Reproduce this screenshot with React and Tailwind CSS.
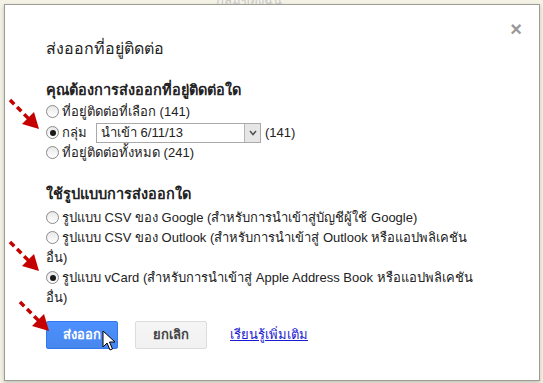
import React from 'react';

const Radio = ({ checked }) => (
    <span className="inline-block align-[-2px] mr-[3px] w-[13px] h-[13px] rounded-full border border-[#8a8a8a] bg-gradient-to-b from-[#e8e8e8] to-white relative">
        {checked && <span className="absolute left-[2.5px] top-[2.5px] w-[6px] h-[6px] rounded-full bg-[#1a1a1a]" />}
    </span>
);

const RedArrow = ({ className }) => (
    <svg className={className} width="36" height="36" viewBox="0 0 36 36">
        <path d="M2 2 L22 22" stroke="#c40000" strokeWidth="3.5" strokeDasharray="6 4" fill="none" />
        <path d="M14 26 L31 31 L26 14 Z" fill="#c40000" />
    </svg>
);

const Cursor = ({ className }) => (
    <svg className={className} width="14" height="22" viewBox="0 0 14 22">
        <path d="M1 1 L1 17 L5 13 L8 20 L10.5 19 L7.5 12 L13 12 Z" fill="white" stroke="black" strokeWidth="1" strokeLinejoin="round" />
    </svg>
);

export default function App() {
    const font = { fontFamily: '"Liberation Sans", Arial, "Noto Sans", sans-serif' };

    return (
        <div className="w-[543px] h-[383px] bg-[#f4f2e4] relative overflow-hidden" style={font}>
            <span className="absolute left-[216px] top-[-9px] text-[13px] text-[#c8c8c8]">กลุ่มของฉัน</span>
            <div className="absolute left-[4px] top-[4px] w-[536px] h-[377px] bg-white border border-[#9c9c94] shadow-[0_2px_4px_rgba(0,0,0,0.2)]">
                <button className="absolute right-[17px] top-[14px] text-[#999] text-[20px] leading-none font-bold">×</button>

                <div className="pl-[41px] pt-[34px] text-[#222]">
                    <h1 className="text-[16px] leading-[20px] text-[#222]">ส่งออกที่อยู่ติดต่อ</h1>

                    <h2 className="mt-[21px] text-[14.5px] font-bold leading-[20px]">คุณต้องการส่งออกที่อยู่ติดต่อใด</h2>
                    <div className="mt-[2px] text-[13px] leading-[20px]">
                        <div><Radio />ที่อยู่ติดต่อที่เลือก (141)</div>
                        <div className="flex items-center h-[21px]">
                            <Radio checked />
                            <span className="mr-[9px]">กลุ่ม</span>
                            <div className="flex items-center w-[165px] h-[20px] border border-[#a9a9a9] bg-white">
                                <span className="flex-1 pl-[4px] text-[13px]">นำเข้า 6/11/13</span>
                                <span className="w-[16px] h-[18px] bg-[#e6e6e6] border-l border-[#b5b5b5] flex items-center justify-center">
                                    <svg width="8" height="6" viewBox="0 0 8 6"><path d="M1 1 L4 4.5 L7 1" stroke="#555" strokeWidth="1.6" fill="none" /></svg>
                                </span>
                            </div>
                            <span className="ml-[4px]">(141)</span>
                        </div>
                        <div><Radio />ที่อยู่ติดต่อทั้งหมด (241)</div>
                    </div>

                    <h2 className="mt-[21px] text-[14.5px] font-bold leading-[20px]">ใช้รูปแบบการส่งออกใด</h2>
                    <div className="mt-[4px] text-[13px] leading-[20px] w-[430px]">
                        <div><Radio />รูปแบบ CSV ของ Google (สำหรับการนำเข้าสู่บัญชีผู้ใช้ Google)</div>
                        <div><Radio />รูปแบบ CSV ของ Outlook (สำหรับการนำเข้าสู่ Outlook หรือแอปพลิเคชัน อื่น)</div>
                        <div><Radio checked />รูปแบบ vCard (สำหรับการนำเข้าสู่ Apple Address Book หรือแอปพลิเคชัน อื่น)</div>
                    </div>

                    <div className="mt-[13px] flex items-center gap-[17px]">
                        <div className="relative">
                            <button className="w-[72px] h-[28px] rounded-[2px] border border-[#3079ed] bg-gradient-to-b from-[#4d90fe] to-[#4787ed] text-white text-[13px] font-bold">ส่งออก</button>
                            <Cursor className="absolute left-[56px] top-[9px]" />
                        </div>
                        <button className="w-[72px] h-[28px] rounded-[2px] border border-[#dcdcdc] bg-gradient-to-b from-[#f5f5f5] to-[#f1f1f1] text-[#444] text-[13px] font-bold">ยกเลิก</button>
                        <a className="ml-[6px] text-[13px] text-[#1a1ad0] underline">เรียนรู้เพิ่มเติม</a>
                    </div>
                </div>
            </div>
            <RedArrow className="absolute left-[8px] top-[98px]" />
            <RedArrow className="absolute left-[8px] top-[240px]" />
            <RedArrow className="absolute left-[18px] top-[300px]" />
        </div>
    );
}
